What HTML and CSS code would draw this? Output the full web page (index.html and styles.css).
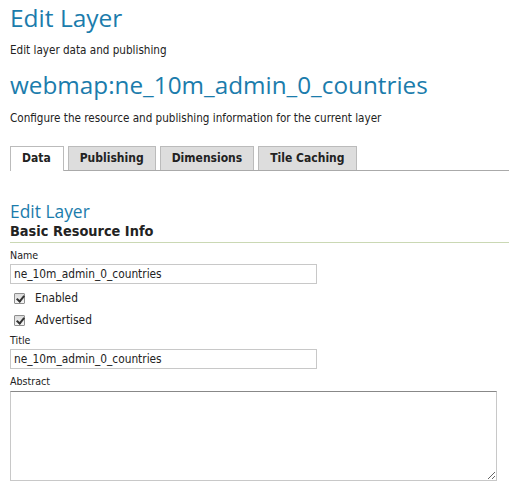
FILE: index.html
```html
<!DOCTYPE html>
<html>
<head>
<meta charset="utf-8">
<link rel="stylesheet" href="styles.css">
</head>
<body>
<div class="page">
  <h1 class="title">Edit Layer</h1>
  <p class="desc">Edit layer data and publishing</p>
  <h2 class="layer">webmap:ne_10m_admin_0_countries</h2>
  <p class="desc desc2">Configure the resource and publishing information for the current layer</p>
  <ul class="tabs">
    <li class="tab active">Data</li>
    <li class="tab">Publishing</li>
    <li class="tab">Dimensions</li>
    <li class="tab">Tile Caching</li>
  </ul>
  <h3 class="sub">Edit Layer</h3>
  <h4 class="section">Basic Resource Info</h4>
  <div class="form">
    <label class="lbl">Name</label>
    <input class="field" type="text" value="ne_10m_admin_0_countries">
    <label class="check"><input class="cb" type="checkbox" checked> <span>Enabled</span></label>
    <label class="check"><input class="cb" type="checkbox" checked> <span>Advertised</span></label>
    <label class="lbl">Title</label>
    <input class="field" type="text" value="ne_10m_admin_0_countries">
    <label class="lbl">Abstract</label>
    <textarea class="area"></textarea>
  </div>
</div>
</body>
</html>
```
FILE: styles.css
```css
html, body { margin: 0; padding: 0; background: #fff; }
body { font-family: "DejaVu Sans Condensed", "DejaVu Sans", sans-serif; color: #222; }
.page { padding: 0 0 0 10px; display: flex; flex-direction: column; }
.title { font-family: "Open Sans", sans-serif; font-weight: 400; font-size: 24.5px; color: #1b7cac; margin: 0; line-height: 34px; margin-top: 1px; }
.desc { font-size: 11.6px; margin: 0; line-height: 14px; margin-top: 8px; }
.layer { font-family: "Open Sans", sans-serif; font-weight: 400; font-size: 24.3px; color: #1b7cac; margin: 0; line-height: 32px; margin-top: 12px; }
.desc2 { margin-top: 10px; }
.tabs { list-style: none; margin: 21px 0 0 0; padding: 0; display: flex; gap: 4px; border-bottom: 1px solid #aaa; height: 24px; }
.tab { font-size: 12px; font-weight: bold; background: #ddd; border: 1px solid #bbb; border-bottom: none; padding: 0 11px; line-height: 23px; height: 23px; }
.tab.active { background: #fff; height: 24px; padding: 0 12px 0 11px; }
.sub { font-family: "Open Sans", sans-serif; font-weight: 400; font-size: 17.4px; color: #1b7cac; margin: 29px 0 0 0; line-height: 22px; }
.section { font-size: 14.4px; font-weight: bold; margin: 0; line-height: 18px; padding-bottom: 2px; border-bottom: 1px solid #cad8b4; }
.form { display: flex; flex-direction: column; align-items: flex-start; }
.lbl { font-size: 10.6px; margin-top: 6px; line-height: 13px; }
.field { width: 307px; height: 20px; box-sizing: border-box; border: 1px solid #c8c8c8; font-family: "DejaVu Sans Condensed", sans-serif; font-size: 11.8px; padding: 0 3px; margin-top: 2px; color: #222; }
.check { display: flex; align-items: center; font-size: 11.8px; margin-top: 6px; height: 16px; }
.cb { appearance: none; -webkit-appearance: none; margin: 0 10px 0 4px; width: 11px; height: 11px; box-sizing: border-box; border: 1px solid #8f8f8f; border-radius: 1px; background: linear-gradient(#dcdcdc, #f4f4f4); position: relative; }
.cb:checked::after { content: ""; position: absolute; left: 3px; top: 0px; width: 3px; height: 6px; border: solid #333; border-width: 0 2px 2px 0; transform: rotate(40deg); }
.area { width: 487px; height: 90px; box-sizing: border-box; border: 1px solid #c8c8c8; border-top-color: #888; margin-top: 3px; resize: both; }
```
